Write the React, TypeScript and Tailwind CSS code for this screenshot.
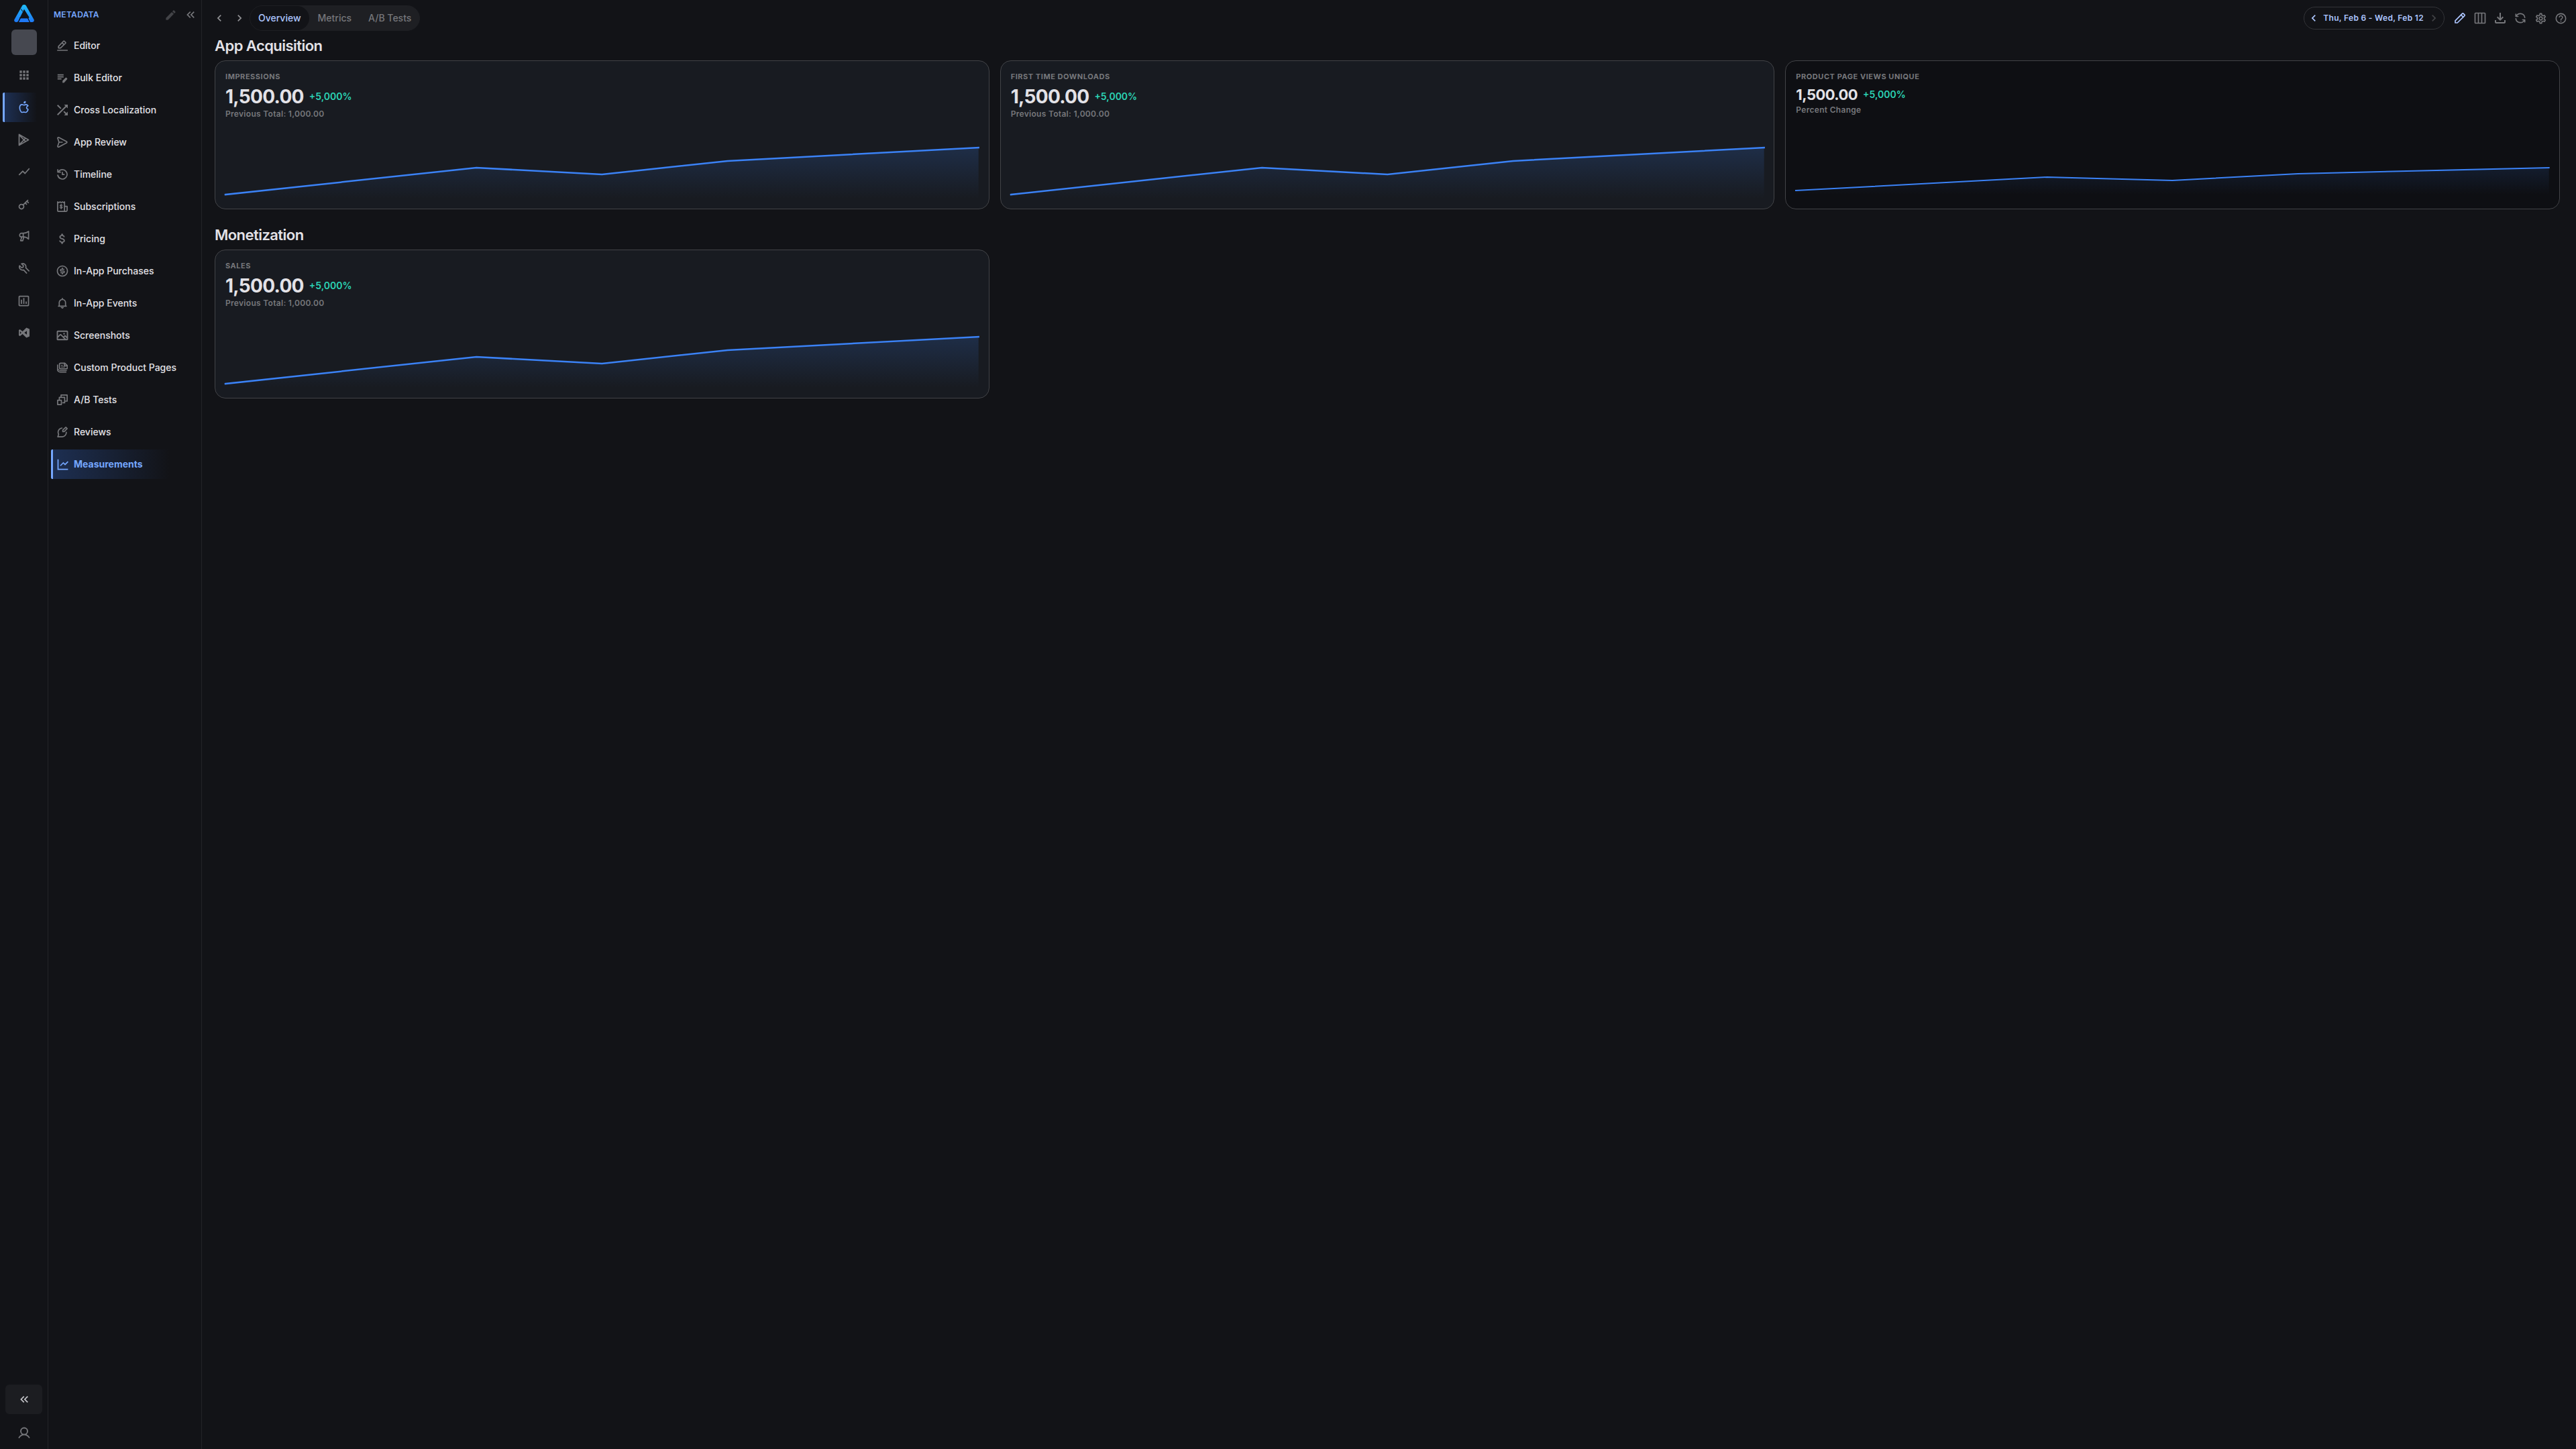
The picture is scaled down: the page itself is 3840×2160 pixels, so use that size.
import { useId, useState } from 'react';
import type { ReactNode } from 'react';
import {
  MdApps,
  MdAttachMoney,
  MdChevronLeft,
  MdChevronRight,
  MdEdit,
  MdHelpOutline,
  MdKeyboardDoubleArrowLeft,
  MdOutlineFileDownload,
  MdOutlineInsertChart,
  MdOutlineSettings,
  MdShowChart,
  MdShuffle,
} from 'react-icons/md';
import { PiImageBold, PiUserBold } from 'react-icons/pi';
import { RiGooglePlayLine, RiKey2Line, RiLineChartLine, RiMoneyDollarCircleLine } from 'react-icons/ri';
import { TbBrandApple, TbColumns3, TbRefresh } from 'react-icons/tb';

/* ---------- icons ---------- */

function Glyph({ children }: { children: ReactNode }) {
  return (
    <svg
      width="16"
      height="16"
      viewBox="0 0 16 16"
      fill="none"
      stroke="currentColor"
      strokeWidth="1.7"
      strokeLinecap="round"
      strokeLinejoin="round"
      aria-hidden="true"
    >
      {children}
    </svg>
  );
}

const EditorIcon = () => (
  <Glyph>
    <path d="M2.2 11.6V9.2L9.6 1.5a1 1 0 0 1 1.4 0l1.6 1.6a1 1 0 0 1 0 1.4L5.2 11.6Z" />
    <path d="M8 4.2l2.2 2.2M.9 15h14.4" />
  </Glyph>
);

const BulkIcon = () => (
  <Glyph>
    <path strokeLinecap="butt" d="M.8 3.7h9M.8 6.700h9M.8 9.700h5.800" />
    <path fill="currentColor" strokeWidth="0.5" d="M8.400 15v-2.400l4.500-4.600c.3-.3.7-.3 1 0l1 1c.3.3.3.7 0 1L10.600 15Z" />
  </Glyph>
);

const SendIcon = () => (
  <Glyph>
    <path d="M1.1 2.4C.7 1.2 1.8.4 2.9.9l11.3 6.2c.9.5.9 1.3 0 1.8L2.9 15.1c-1.1.5-2.2-.3-1.8-1.5L3 8Z" />
    <path d="M3 8h4.8" />
  </Glyph>
);

const TimelineIcon = () => (
  <Glyph>
    <path d="M2.4 3.8A7 7 0 1 1 1.1 9" />
    <path d="M1.1.9v3.7h4M8 4.8v3.4h2.6" />
  </Glyph>
);

const SubscriptionsIcon = () => (
  <Glyph>
    <path d="M.9.9l1.8 1 1.8-1 1.8 1 1.8-1 1.8 1 1.3-1v14.2H2a1.1 1.1 0 0 1-1.1-1.1Z" />
    <path d="M11.4 7.6h3.7v5.6a1.9 1.9 0 0 1-1.9 1.9h-1.8" />
    <path strokeWidth="1.3" d="M7.8 6.1c-.4-.6-3.2-.8-3.2.6 0 1.5 3.3.8 3.3 2.3 0 1.3-2.9 1.2-3.4.4M6.2 4.4v7" />
  </Glyph>
);

const BellIcon = () => (
  <Glyph>
    <path d="M3.300 12.200V7.100a4.700 4.700 0 0 1 9.400 0v5.100M2.200 12.400h11.600M8 .900v1.200" />
    <path fill="currentColor" strokeWidth="1" d="M6.200 14.200h3.600a1.900 1.900 0 0 1-3.600 0Z" />
  </Glyph>
);

const PagesIcon = () => (
  <Glyph>
    <path d="M5.4 1.4h6.2l3.8 3.8V8a1.8 1.8 0 0 1-1.8 1.8H5.4A1.8 1.8 0 0 1 3.6 8V3.2a1.8 1.8 0 0 1 1.8-1.8Z" />
    <path d="M11 1.6v3.8h4M.7 4.2v6.2a4.2 4.2 0 0 0 4.2 4.2h8.4" />
    <path strokeWidth="1.2" d="M2 10.4a2.6 2.6 0 0 0 2.6 2h9.6M6.4 4.6h1.8M6.4 7.2h5" />
  </Glyph>
);

const TestsIcon = () => (
  <Glyph>
    <path d="M6 4.2V.9h9.1V10h-3.2" />
    <path d="M3.4 7.2V4.4h8v8H8.6" />
    <path d="M.9 8.6h5.6v6.5H.9Z" />
  </Glyph>
);

const ReviewsIcon = () => (
  <Glyph>
    <path d="M7.400 2a6.4 6.4 0 0 0-5 9.4L1.2 15.1h6.6A6.2 6.2 0 0 0 13.800 8.400" />
    <path d="M8.6 7.400V5.200L13.1.9l2 2-4.400 4.500Z" />
  </Glyph>
);

const MegaphoneIcon = () => (
  <Glyph>
    <path d="M14.6.9v11.400C12.2 9.8 9.8 9.2 7 9.1H4a2.7 2.7 0 0 1 0-5.4h3c2.8-.1 5.2-.7 7.6-2.800Z" />
    <path d="M6.6 3.9v5.1M3.4 9.2l1 .6-1.7 5h3.2l1.6-5.4" />
  </Glyph>
);

const WrenchIcon = () => (
  <Glyph>
    <path d="M11.6 15.100L7.200 10.400A4.800 4.800 0 0 1 1.200 4.100l2.900 2.900 2.300-.6.6-2.300L4.100 1.200a4.800 4.800 0 0 1 6.300 6L15.100 11.800" />
  </Glyph>
);

const StudioIcon = () => (
  <svg width="16" height="16" viewBox="0 0 16 16" fill="currentColor" aria-hidden="true">
    <path
      fillRule="evenodd"
      d="M11.4.5L16 2.4v11.2l-4.6 1.9-5.8-5.400L1.800 13 0 12.100V3.900L1.800 3l3.800 2.900ZM12 5.200L8.300 8l3.700 2.800ZM1.800 5.900v4.200L3.900 8Z"
    />
  </svg>
);

const PencilIcon = () => (
  <Glyph>
    <path d="M1 15v-3.200L11.4 1.300a1.300 1.300 0 0 1 1.800 0l1.500 1.500a1.300 1.300 0 0 1 0 1.800L4.200 15Z" />
    <path d="M9.6 3.2l3.2 3.2" />
  </Glyph>
);

function Logo() {
  return (
    <svg width="30" height="26" viewBox="0 0 30 26" aria-hidden="true">
      <defs>
        <linearGradient id="logo-fill" x1="0" y1="0" x2="0" y2="1">
          <stop offset="0" stopColor="#1fbdf8" />
          <stop offset="1" stopColor="#1f78f5" />
        </linearGradient>
      </defs>
      <path
        fill="url(#logo-fill)"
        d="M11.8 1.9C13-.6 17-.6 18.2 1.9L29.5 21.9c1 1.8-.2 4.1-2.4 4.1h-3.2L20.8 19.300h2L15 6.800 6.400 23.900C5.700 25.400 4.700 26 3.200 26 .7 26-.5 23.800.5 21.900Z"
      />
      <path fill="#1f78f5" d="M9.8 20.2h10.4L23 26H6.8Z" />
      <path stroke="#121317" strokeWidth="1" d="M10.2 6.2l2.600 4M8 19.700h14M9.400 19.800L6.300 26M20.400 19.800l3.100 6.200" />
    </svg>
  );
}

/* ---------- data ---------- */

const railItems = [
  { label: 'Apps', icon: <MdApps size={20} /> },
  { label: 'App Store', icon: <TbBrandApple size={20} /> },
  { label: 'Google Play', icon: <RiGooglePlayLine size={21} /> },
  { label: 'Performance', icon: <MdShowChart size={20} /> },
  { label: 'Keywords', icon: <RiKey2Line size={21} /> },
  { label: 'Campaigns', icon: <MegaphoneIcon /> },
  { label: 'Tools', icon: <WrenchIcon /> },
  { label: 'Reports', icon: <MdOutlineInsertChart size={21} /> },
  { label: 'Studio', icon: <StudioIcon /> },
];

const menuItems = [
  { label: 'Editor', icon: <EditorIcon /> },
  { label: 'Bulk Editor', icon: <BulkIcon /> },
  { label: 'Cross Localization', icon: <MdShuffle size={24} /> },
  { label: 'App Review', icon: <SendIcon /> },
  { label: 'Timeline', icon: <TimelineIcon /> },
  { label: 'Subscriptions', icon: <SubscriptionsIcon /> },
  { label: 'Pricing', icon: <MdAttachMoney size={20} /> },
  { label: 'In-App Purchases', icon: <RiMoneyDollarCircleLine size={20} /> },
  { label: 'In-App Events', icon: <BellIcon /> },
  { label: 'Screenshots', icon: <PiImageBold size={20} /> },
  { label: 'Custom Product Pages', icon: <PagesIcon /> },
  { label: 'A/B Tests', icon: <TestsIcon /> },
  { label: 'Reviews', icon: <ReviewsIcon /> },
  { label: 'Measurements', icon: <RiLineChartLine size={21} /> },
];

const actions = [
  { label: 'Edit', icon: <PencilIcon />, active: true },
  { label: 'Columns', icon: <TbColumns3 size={20} /> },
  { label: 'Download', icon: <MdOutlineFileDownload size={24} /> },
  { label: 'Refresh', icon: <TbRefresh size={20} /> },
  { label: 'Settings', icon: <MdOutlineSettings size={19} /> },
  { label: 'Help', icon: <MdHelpOutline size={19} /> },
];

interface Metric {
  title: string;
  value: string;
  change: string;
  note: string;
  muted?: boolean;
}

const acquisition: Metric[] = [
  { title: 'Impressions', value: '1,500.00', change: '+5,000%', note: 'Previous Total: 1,000.00' },
  { title: 'First Time Downloads', value: '1,500.00', change: '+5,000%', note: 'Previous Total: 1,000.00' },
  { title: 'Product Page Views Unique', value: '1,500.00', change: '+5,000%', note: 'Percent Change', muted: true },
];

const monetization: Metric[] = [
  { title: 'Sales', value: '1,500.00', change: '+5,000%', note: 'Previous Total: 1,000.00' },
];

/* ---------- pieces ---------- */

interface SparklineProps {
  points: number[][];
  base: number;
  opacity: number;
  stroke: number;
}

// x runs 0-6, y is in pixels from the top of the 80px plot
function Sparkline({ points, base, opacity, stroke }: SparklineProps) {
  const id = useId();
  const line = points.map(([x, y]) => `${x},${y}`).join(' L');
  return (
    <svg
      viewBox="0 0 6 80"
      preserveAspectRatio="none"
      className="mt-auto block h-20 w-full overflow-visible"
      aria-hidden="true"
    >
      <defs>
        <linearGradient id={id} x1="0" y1="0" x2="0" y2="1">
          <stop offset="0" stopColor="#3b82f6" stopOpacity={opacity} />
          <stop offset="1" stopColor="#3b82f6" stopOpacity="0" />
        </linearGradient>
      </defs>
      <path d={`M${line} L6,${base} L0,${base} Z`} fill={`url(#${id})`} />
      <path
        d={`M${line}`}
        fill="none"
        stroke="#3b82f6"
        strokeWidth={stroke}
        strokeLinecap="square"
        vectorEffect="non-scaling-stroke"
      />
    </svg>
  );
}

function MetricCard({ metric }: { metric: Metric }) {
  const { title, value, change, note, muted } = metric;
  return (
    <article
      className={`flex h-[222px] flex-col rounded-2xl border border-[#424347] p-[15px] ${
        muted ? 'bg-[#0e0f13]' : 'bg-[#181b21]'
      }`}
    >
      <h3 className="text-[11px] leading-4 font-bold tracking-wider text-[#76777b] uppercase">{title}</h3>
      <div className="mt-1 flex items-center gap-2">
        <span
          className={`font-bold tracking-tight text-[#e3e2e7] ${
            muted ? 'text-[22px] leading-[30px]' : 'text-[28px] leading-9'
          }`}
        >
          {value}
        </span>
        <span className="text-sm font-semibold text-[#2bd4b5]">{change}</span>
      </div>
      <p className="text-xs leading-4 font-semibold tracking-wide text-[#76777b]">{note}</p>
      {muted ? (
        <Sparkline points={[[0, 68], [2, 48], [3, 53], [4, 43], [6, 34]]} base={74} opacity={0.12} stroke={2} />
      ) : (
        <Sparkline points={[[0, 74], [2, 34], [3, 44], [4, 24], [6, 4]]} base={80} opacity={0.18} stroke={2.5} />
      )}
    </article>
  );
}

function Section({ title, metrics }: { title: string; metrics: Metric[] }) {
  return (
    <section>
      <h2 className="mb-2 text-[22px] leading-7 font-semibold tracking-tight text-[#e3e2e7]">{title}</h2>
      <div className="grid grid-cols-3 gap-4">
        {metrics.map((m) => (
          <MetricCard key={m.title} metric={m} />
        ))}
      </div>
    </section>
  );
}

function Rail() {
  const [active, setActive] = useState('App Store');
  return (
    <aside className="flex w-[72px] shrink-0 flex-col border-r border-[#232428]">
      <a href="#" aria-label="Home" className="mt-[7px] flex justify-center">
        <Logo />
      </a>
      <button
        type="button"
        aria-label="Switch app"
        className="mt-[11px] size-[38px] self-center rounded-md bg-[#464850]"
      />
      <nav className="mt-2 flex flex-col gap-1 px-1">
        {railItems.map(({ label, icon }) => (
          <button
            key={label}
            type="button"
            aria-label={label}
            onClick={() => setActive(label)}
            className={`flex h-11 items-center justify-center rounded-xs border-l-3 pr-[3px] ${
              label === active
                ? 'border-[#75a7ff] bg-linear-to-r from-[#1d2f52] to-transparent to-80% text-[#75a7ff]'
                : 'border-transparent text-[#76777b]'
            }`}
          >
            {icon}
          </button>
        ))}
      </nav>
      <div className="mt-auto flex flex-col gap-1 px-2">
        <button
          type="button"
          aria-label="Collapse rail"
          className="flex h-11 items-center justify-center rounded-md bg-[#1c1d21] text-[#c6c6cb]"
        >
          <MdKeyboardDoubleArrowLeft size={20} />
        </button>
        <button type="button" aria-label="Account" className="flex h-12 items-center justify-center text-[#76777b]">
          <PiUserBold size={20} />
        </button>
      </div>
    </aside>
  );
}

function Menu() {
  const [active, setActive] = useState('Measurements');
  return (
    <aside className="flex w-[229px] shrink-0 flex-col border-r border-[#232428]">
      <div className="flex h-11 items-center pr-px pl-2">
        <h1 className="mr-auto text-xs font-semibold tracking-wide text-[#75a7ff]">METADATA</h1>
        <button type="button" aria-label="Edit menu" className="flex w-[30px] justify-center text-[#424347]">
          <MdEdit size={19} />
        </button>
        <button type="button" aria-label="Collapse menu" className="flex w-[30px] justify-center text-[#76777b]">
          <MdKeyboardDoubleArrowLeft size={20} />
        </button>
      </div>
      <nav className="flex flex-col gap-1 px-1 pt-0.5">
        {menuItems.map(({ label, icon }) => (
          <a
            key={label}
            href="#"
            onClick={() => setActive(label)}
            className={`flex h-11 items-center gap-[9px] rounded-xs border-l-3 pl-1.5 text-sm ${
              label === active
                ? 'border-[#75a7ff] bg-linear-to-r from-[#1d2f52] to-transparent to-80% font-bold text-[#75a7ff]'
                : 'border-transparent font-medium text-[#e3e2e7]'
            }`}
          >
            <span
              className={`flex w-4 shrink-0 justify-center [&>svg]:shrink-0 ${
                label === active ? '' : 'text-[#76777b]'
              }`}
            >
              {icon}
            </span>
            {label}
          </a>
        ))}
      </nav>
    </aside>
  );
}

function TopBar() {
  const [tab, setTab] = useState('Overview');
  return (
    <header className="flex items-center pt-2 pr-2 pl-[11px]">
      <button type="button" aria-label="Back" className="flex w-[30px] justify-center text-[#909094]">
        <MdChevronLeft size={20} />
      </button>
      <button type="button" aria-label="Forward" className="flex w-[30px] justify-center text-[#909094]">
        <MdChevronRight size={20} />
      </button>
      <div className="flex gap-px rounded-full border border-[#1e1f23] bg-[#1e1f23]">
        {['Overview', 'Metrics', 'A/B Tests'].map((t) => (
          <button
            key={t}
            type="button"
            onClick={() => setTab(t)}
            className={`h-9 rounded-full px-3 text-sm font-medium ${
              t === tab ? 'bg-[#121317] text-[#adc6ff]' : 'text-[#76777b]'
            }`}
          >
            {t}
          </button>
        ))}
      </div>

      <div className="mr-2 ml-auto flex h-[34px] items-center rounded-full border border-[#333438] text-[#adc6ff]">
        <button type="button" aria-label="Previous period" className="flex w-7 justify-center">
          <MdChevronLeft size={20} />
        </button>
        <button type="button" className="text-xs font-semibold tracking-wide">
          Thu, Feb 6 - Wed, Feb 12
        </button>
        <button type="button" aria-label="Next period" className="flex w-[30px] justify-center text-[#424347]">
          <MdChevronRight size={20} />
        </button>
      </div>
      {actions.map(({ label, icon, active }) => (
        <button
          key={label}
          type="button"
          aria-label={label}
          className={`flex w-[30px] justify-center ${active ? 'text-[#adc6ff]' : 'text-[#76777b]'}`}
        >
          {icon}
        </button>
      ))}
    </header>
  );
}

export default function App() {
  return (
    <div className="flex min-h-screen bg-[#121317] font-['Inter',sans-serif]">
      <Rail />
      <Menu />
      <div className="min-w-0 flex-1">
        <TopBar />
        <main className="flex flex-col gap-6 pt-2 pr-6 pl-[19px]">
          <Section title="App Acquisition" metrics={acquisition} />
          <Section title="Monetization" metrics={monetization} />
        </main>
      </div>
    </div>
  );
}
